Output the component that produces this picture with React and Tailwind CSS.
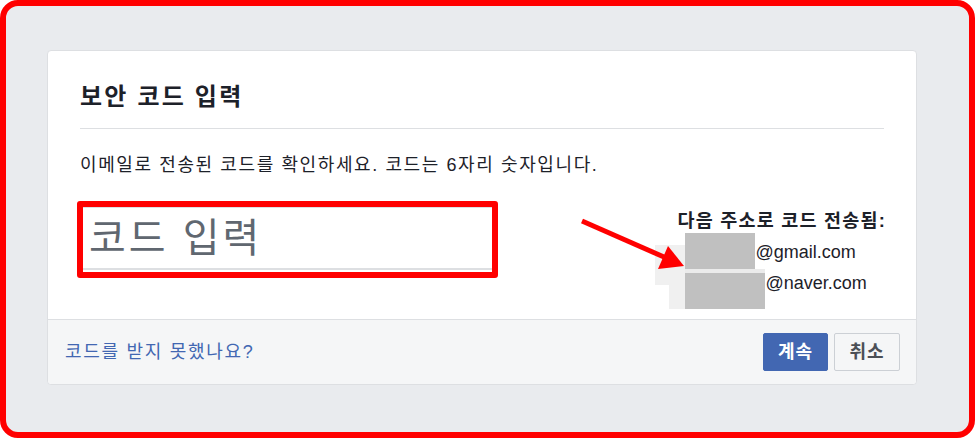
export default function App() {
  return (
    <div className="relative h-[438px] w-[975px] bg-white font-['Liberation_Sans','Noto_Sans_CJK_KR',sans-serif] text-[#1d2129]">
      <div className="h-full rounded-[18px] border-[6px] border-[#ff0000] bg-[#e9ebee] pl-[41px] pt-[44px]">
        {/* dialog card */}
        <div className="w-[870px] rounded-[4px] border border-[#dddfe2] bg-white">
          <div className="px-[32px]">
            <div className="border-b border-[#dddfe2] pb-[17px] pt-[32px] text-[24px] font-bold leading-[28px] tracking-[2.2px]">
              보안 코드 입력
            </div>
            <p className="mt-[25px] text-[18px] leading-[22px] tracking-[1.6px]">
              이메일로 전송된 코드를 확인하세요. 코드는 6자리 숫자입니다.
            </p>
            <div className="mb-[20px] mt-[25px] flex items-start">
              <div className="-ml-[3px] h-[77px] w-[421px] rounded-[3px] border-[6px] border-[#ff0000] pb-[2px]">
                <input
                  type="text"
                  placeholder="코드 입력"
                  className="h-full w-full border-b-2 border-t border-[#dddfe2] bg-white pl-[6px] text-[40px] leading-none tracking-[3px] outline-none placeholder:text-[#606770]"
                />
              </div>
              <div className="ml-auto -mr-[2px] flex flex-col pt-[8px]">
                <div className="text-right text-[18.5px] font-bold leading-[24px] tracking-[1.2px]">다음 주소로 코드 전송됨:</div>
                <div className="relative mt-[4px] pl-[8px] text-[18px] leading-[31px]">
                  <div className="absolute left-[-22px] top-[8px] h-[40px] w-[30px] bg-[#f0f0f0]"></div>
                  <div className="absolute left-[-8px] top-[48px] h-[24px] w-[16px] bg-[#f0f0f0]"></div>
                  <div className="absolute left-[8px] top-[32px] h-[4px] w-[80px] bg-[#ebebeb]"></div>
                  <div className="relative flex h-[31px] items-center">
                    <span className="relative -top-[2px] h-[36px] w-[70px] bg-[#c0c0c0]"></span>
                    <span>@gmail.com</span>
                  </div>
                  <div className="relative flex h-[31px] items-center">
                    <span className="relative top-[7px] h-[36px] w-[80px] bg-[#c0c0c0]"></span>
                    <span>@naver.com</span>
                  </div>
                </div>
              </div>
            </div>
          </div>
          {/* footer */}
          <div className="flex h-[65px] items-center rounded-b-[4px] border-t border-[#dddfe2] bg-[#f5f6f7] pl-[17px] pr-[16px]">
            <a href="#" className="text-[18px] tracking-[1.7px] text-[#4267b2]">
              코드를 받지 못했나요?
            </a>
            <div className="ml-auto flex gap-[6px]">
              <button className="h-[38px] w-[65px] rounded-[2px] border border-[#4267b2] bg-[#4267b2] text-[18px] font-bold tracking-[1px] text-white">
                계속
              </button>
              <button className="h-[38px] w-[66px] rounded-[2px] border border-[#ccd0d5] bg-[#f5f6f7] text-[18px] font-bold tracking-[1px] text-[#4b4f56]">
                취소
              </button>
            </div>
          </div>
        </div>
      </div>
      {/* annotation arrow */}
      <svg className="pointer-events-none absolute left-0 top-0" width="975" height="438" viewBox="0 0 975 438">
        <line x1="582" y1="221" x2="664" y2="257" stroke="#ff0000" strokeWidth="5" />
        <polygon points="658,269 684,266 668,246" fill="#ff0000" />
      </svg>
    </div>
  );
}
